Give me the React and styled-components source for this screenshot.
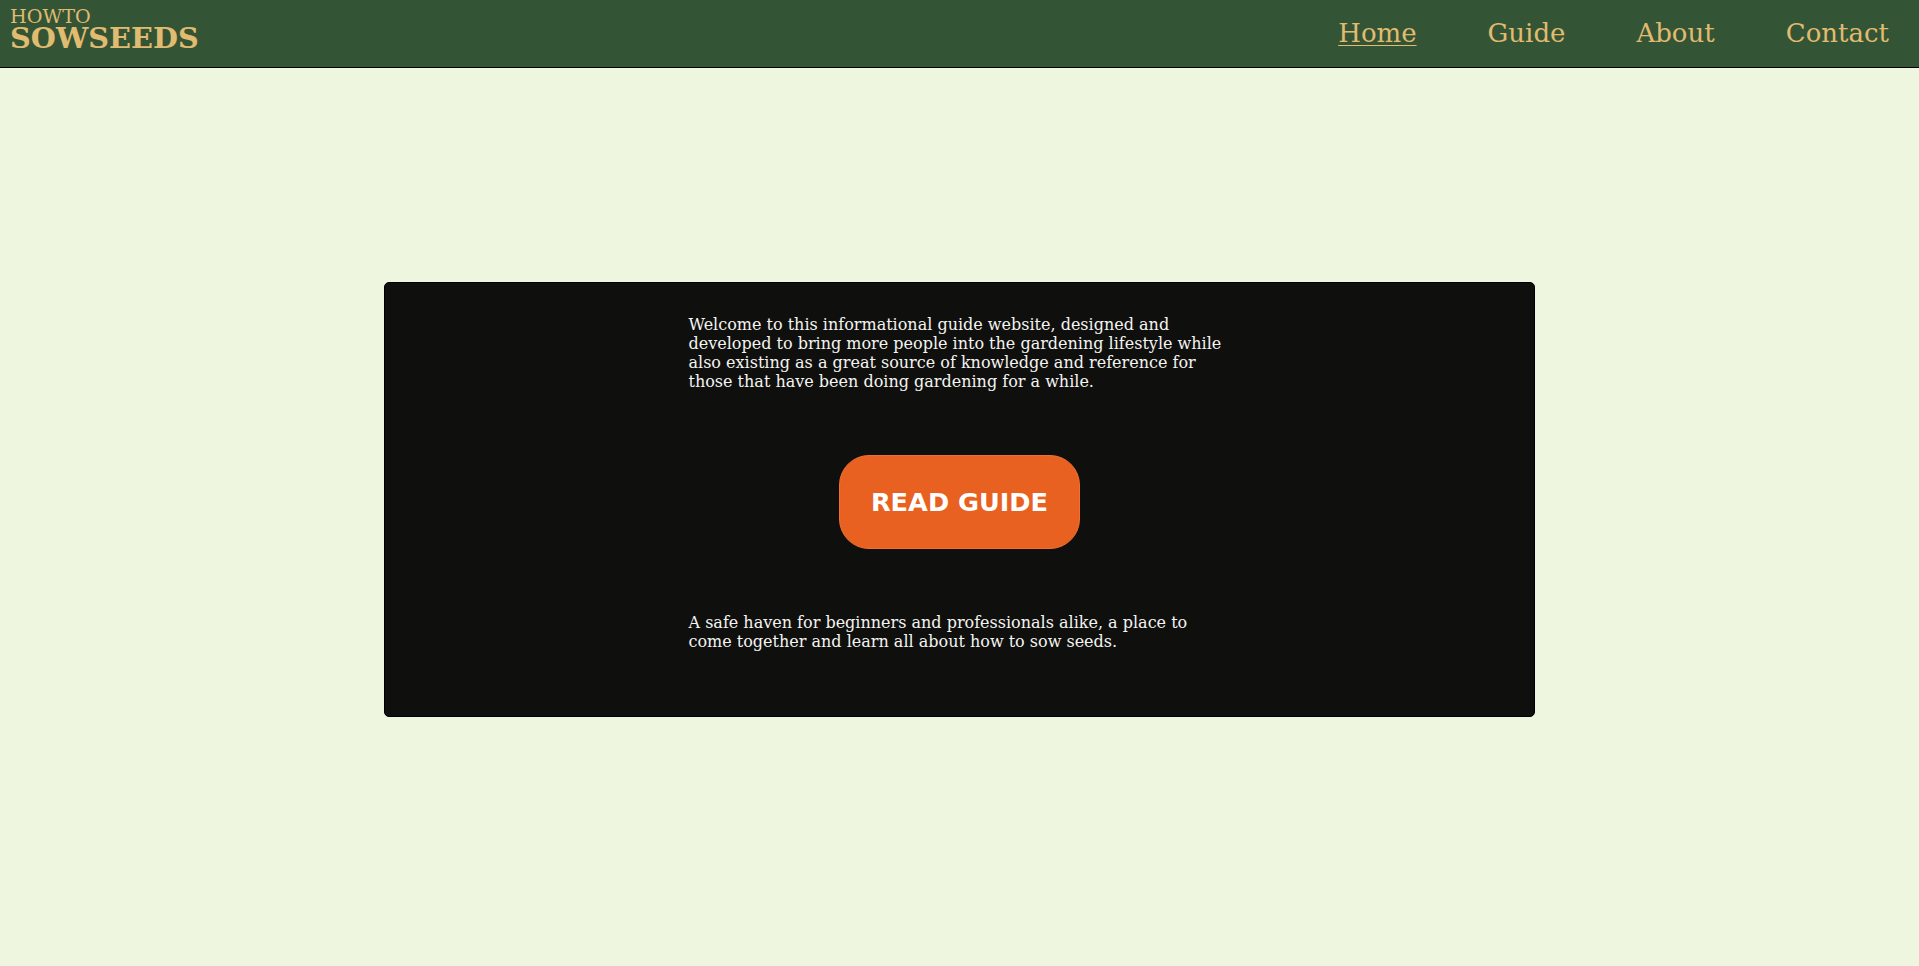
import React from 'react';
import styled, { createGlobalStyle } from 'styled-components';

const GlobalStyle = createGlobalStyle`
  html, body {
    margin: 0;
    padding: 0;
    background-color: #eff6e0;
    font-family: "DejaVu Serif", serif;
  }
`;

export default function App() {
  return (
    <>
      <GlobalStyle />
      <Header>
        <Logo href="#">
          <small>HOWTO</small>
          <strong>SOWSEEDS</strong>
        </Logo>
        <Nav>
          <NavLink href="#" $active>Home</NavLink>
          <NavLink href="#">Guide</NavLink>
          <NavLink href="#">About</NavLink>
          <NavLink href="#">Contact</NavLink>
        </Nav>
      </Header>
      <Main>
        <Hero>
          <Text>
            Welcome to this informational guide website, designed and developed to bring more people into
            the gardening lifestyle while also existing as a great source of knowledge and reference for
            those that have been doing gardening for a while.
          </Text>
          <GuideButton>READ GUIDE</GuideButton>
          <Text>
            A safe haven for beginners and professionals alike, a place to come together and learn all
            about how to sow seeds.
          </Text>
        </Hero>
      </Main>
    </>
  );
}

const Header = styled.header`
  display: flex;
  align-items: center;
  justify-content: space-between;
  height: 67px;
  padding: 0 30px 0 10px;
  background-color: #345535;
  border-bottom: 1px solid #000;
`;

const Logo = styled.a`
  display: flex;
  flex-direction: column;
  margin-top: -10px;
  color: #e0bb70;
  text-decoration: none;

  small {
    font-size: 19.2px;
    line-height: 19px;
  }

  strong {
    font-size: 28.8px;
    line-height: 24px;
    font-weight: bold;
  }
`;

const Nav = styled.nav`
  display: flex;
  align-items: center;
  gap: 71px;
  margin-top: -2px;
`;

const NavLink = styled.a`
  color: #e0bb70;
  font-size: 26px;
  text-decoration: ${(p) => (p.$active ? 'underline' : 'none')};
  text-underline-offset: 3px;
  text-decoration-thickness: 1px;
`;

const Main = styled.main`
  display: flex;
  justify-content: center;
  padding-top: 214px;
`;

const Hero = styled.section`
  display: flex;
  flex-direction: column;
  align-items: center;
  gap: 64px;
  width: 60%;
  box-sizing: border-box;
  padding: 32px 0 65px;
  background-color: #0f0f0e;
  border: 1px solid #000;
  border-radius: 5px;
`;

const Text = styled.p`
  width: 542px;
  margin: 0;
  color: #f4f4f0;
  font-size: 16px;
`;

const GuideButton = styled.button`
  padding: 31px 31px;
  border: 1px solid #f07030;
  border-radius: 30px;
  background-color: #e86121;
  color: #fff;
  font-family: "DejaVu Sans", sans-serif;
  font-size: 25.6px;
  font-weight: bold;
  line-height: 30px;
  cursor: pointer;
`;
